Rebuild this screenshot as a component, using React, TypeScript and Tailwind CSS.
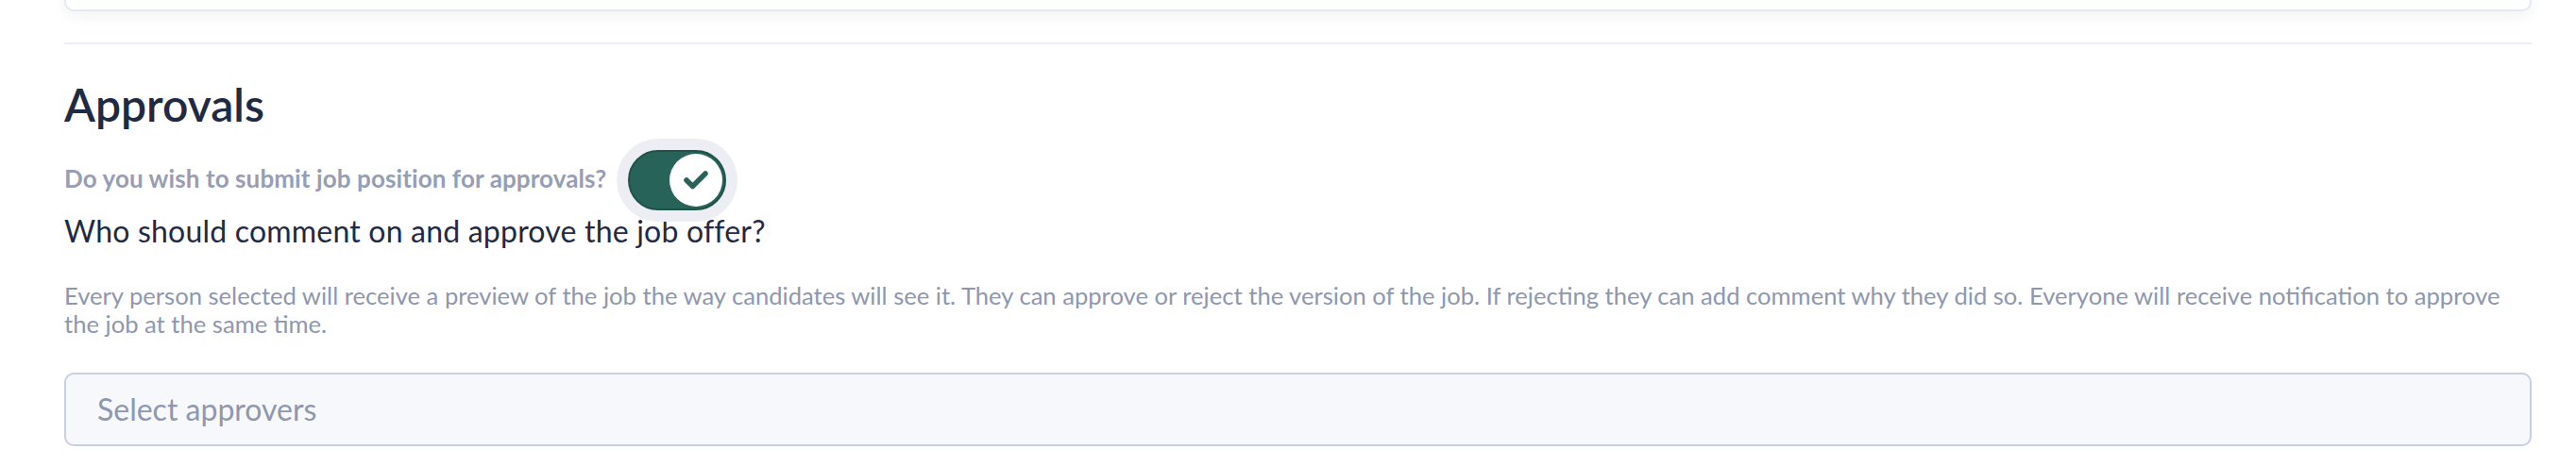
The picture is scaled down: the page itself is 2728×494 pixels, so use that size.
import React from "react";

export default function App() {
  return (
    <div className="w-[2728px] h-[494px] bg-white overflow-hidden" style={{ fontFamily: "Lato, 'Noto Sans', sans-serif" }}>
      <div className="pl-[68px] pr-[47px] w-full">
        {/* previous card (bottom edge visible) */}
        <div className="h-[40px] -mt-[28px] rounded-[10px] border-2 border-[#e3e8f3] bg-white shadow-[0_6px_14px_rgba(30,40,70,0.05)]" />
        {/* divider */}
        <div className="mt-[33px] h-[2px] bg-[#eceff5]" />

        <h2 className="mt-[40px] text-[48px] leading-[48px] font-semibold text-[#1f2a44]">Approvals</h2>

        <div className="mt-[24px] flex items-center gap-[23px]">
          <span className="text-[26px] leading-[28px] pb-[4px] font-bold text-[#959eb6] tracking-[0.1px]">
            Do you wish to submit job position for approvals?
          </span>
          <button
            className="relative flex items-center justify-end w-[104px] h-[64px] rounded-full bg-[#28635a] border-2 border-[#1f5249] shadow-[0_0_0_12px_#eceef3] p-[2px]"
            aria-pressed="true"
          >
            <span className="flex items-center justify-center w-[56px] h-[56px] rounded-full bg-white">
              <svg width="28" height="22" viewBox="0 0 28 22" fill="none">
                <path d="M4 11 L10.5 17.5 L24 4" stroke="#28635a" strokeWidth="5.5" strokeLinecap="round" strokeLinejoin="round" />
              </svg>
            </span>
          </button>
        </div>

        <p className="mt-[4px] text-[32px] leading-[36px] text-[#1f2a44] tracking-[0.2px]">
          Who should comment on and approve the job offer?
        </p>

        <p className="mt-[35px] text-[25.6px] leading-[30px] text-[#8e97b0]">
          Every person selected will receive a preview of the job the way candidates will see it. They can approve or reject the version of the job. If rejecting they can add comment why they did so. Everyone will receive notification to approve the job at the same time.
        </p>

        <div className="mt-[37px] h-[78px] flex items-center rounded-[10px] border-2 border-[#c8cfe0] bg-[#f6f8fc] px-[33px]">
          <span className="text-[32px] text-[#8e97b0]">Select approvers</span>
        </div>
      </div>
    </div>
  );
}
